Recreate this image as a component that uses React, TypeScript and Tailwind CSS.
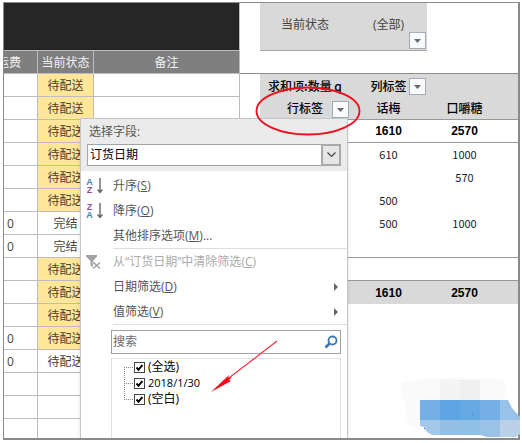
import React, { useState } from 'react';

const orders = [
  { fee: '', status: '待配送', pending: true },
  { fee: '', status: '待配送', pending: true },
  { fee: '', status: '待配送', pending: true },
  { fee: '', status: '待配送', pending: true },
  { fee: '', status: '待配送', pending: true },
  { fee: '', status: '待配送', pending: true },
  { fee: '0', status: '完结', pending: false },
  { fee: '0', status: '完结', pending: false },
  { fee: '', status: '待配送', pending: true },
  { fee: '', status: '待配送', pending: true },
  { fee: '', status: '待配送', pending: true },
  { fee: '0', status: '待配送', pending: true },
  { fee: '0', status: '待配送', pending: false },
  { fee: '', status: '', pending: false },
  { fee: '', status: '', pending: false },
];

const pivotRows = [
  ['610', '1000'],
  ['', '570'],
  ['500', ''],
  ['500', '1000'],
];

const ArrowButton = ({ label, className }: { label: string; className: string }) => (
  <button
    type="button"
    aria-label={label}
    className={'absolute right-px flex h-[17px] w-[17px] items-center justify-center border border-[#a3abb5] bg-[#f9fafc] ' + className}
  >
    <svg width="7" height="4" viewBox="0 0 7 4">
      <path d="M0 0h7L3.5 4z" fill="#6a6a6a" />
    </svg>
  </button>
);

const SortIcon = ({ top, bottom }: { top: string; bottom: string }) => (
  <span className="flex gap-1">
    <span className="flex w-[7px] flex-col text-center font-['Liberation_Sans'] text-[9px] leading-2 font-bold">
      <span className={top === 'A' ? 'text-[#3f7fb8]' : 'text-[#8a4f9e]'}>{top}</span>
      <span className={bottom === 'A' ? 'text-[#3f7fb8]' : 'text-[#8a4f9e]'}>{bottom}</span>
    </span>
    <svg width="6" height="16" viewBox="0 0 6 16">
      <path d="M3 0v15M.5 11.500L3 14.500l2.500-3" fill="none" stroke="#666" strokeWidth="1.400" />
    </svg>
  </span>
);

const ClearFilterIcon = () => (
  <svg width="16" height="16" viewBox="0 0 16 16">
    <path d="M0 1h11v1.5L7 7v6.5L4.5 11V7L0 2.5z" fill="#a3a3a3" />
    <path d="M7 7.5l7.5 7M14 8l-7 6.5" fill="none" stroke="#fff" strokeWidth="3" />
    <path d="M7 8l7 6.500M14 8.500l-7 6" fill="none" stroke="#a3a3a3" strokeWidth="1.600" />
  </svg>
);

const MenuItem = ({ icon, text, hotkey, after = '', disabled = false, submenu = false }: any) => (
  <button
    type="button"
    disabled={disabled}
    className={'flex h-[25px] w-full items-center pr-[9px] text-left ' + (disabled ? 'text-[#ababab]' : 'text-[#555]')}
  >
    <span className="flex w-8 shrink-0 pl-[5px]">{icon}</span>
    <span className="flex-1 whitespace-nowrap">
      {text}(<span className="underline">{hotkey}</span>){after}
    </span>
    {submenu && (
      <svg width="4" height="8" viewBox="0 0 4 8">
        <path d="M0 0l4 4-4 4z" fill="#666" />
      </svg>
    )}
  </button>
);

const FilterMenu = () => {
  const [field, setField] = useState<string>('订货日期')
  const [search, setSearch] = useState<string>('')
  const [checked, setChecked] = useState<string[]>(['(全选)', '2018/1/30', '(空白)'])

  const toggle = (item: string) => {
    setChecked(checked.includes(item) ? checked.filter((i) => i !== item) : [...checked, item])
  }

  return (
    <div className="absolute top-[115px] bottom-0 left-[76px] flex w-[268px] flex-col border border-b-0 border-[#c6c6c6] bg-white shadow-md">
      <div className="bg-[#ebebeb] px-1.5 pb-[5px]">
        <label htmlFor="field" className="block h-[25px] pl-0.5 leading-[25px] text-[#555]">
          选择字段:
        </label>
        <div className="relative">
          <select
            id="field"
            value={field}
            onChange={(e) => setField(e.target.value)}
            className="block h-[22px] w-full appearance-none border border-[#a5a5a5] bg-white pl-0.5 text-black outline-none"
          >
            <option>订货日期</option>
          </select>
          <span className="pointer-events-none absolute inset-y-0 right-0 flex w-5 items-center justify-center border-2 border-[#a9a9a9] bg-[#e6e6e6]">
            <svg width="9" height="6" viewBox="0 0 9 6">
              <path d="M.5.5l4 4 4-4" fill="none" stroke="#444" strokeWidth="1.2" />
            </svg>
          </span>
        </div>
      </div>
      <div className="pt-0.5">
        <MenuItem icon={<SortIcon top="A" bottom="Z" />} text="升序" hotkey="S" />
        <MenuItem icon={<SortIcon top="Z" bottom="A" />} text="降序" hotkey="O" />
        <MenuItem text="其他排序选项" hotkey="M" after="..." />
        <div className="ml-8 h-px bg-[#dedede]" />
        <MenuItem icon={<ClearFilterIcon />} text="从“订货日期”中清除筛选" hotkey="C" disabled />
        <MenuItem text="日期筛选" hotkey="D" submenu />
        <MenuItem text="值筛选" hotkey="V" submenu />
        <div className="ml-8 h-px bg-[#dedede]" />
      </div>
      <div className="flex flex-1 flex-col pt-[5px] pr-1.5 pl-[30px]">
        <div className="flex h-6 items-center border border-[#a0a0a0] pr-0.5">
          <input
            type="text"
            aria-label="搜索"
            placeholder="搜索"
            value={search}
            onChange={(e) => setSearch(e.target.value)}
            className="min-w-0 flex-1 pl-px outline-none placeholder:text-[#6a6a6a]"
          />
          <svg width="14" height="14" viewBox="0 0 14 14" fill="none" stroke="#3f78b5">
            <circle cx="8.500" cy="5.500" r="4" strokeWidth="1.800" />
            <path d="M5.500 8.500L1.500 12.500" strokeWidth="2.600" />
          </svg>
        </div>
        <div className="mt-1 flex-1 border border-b-0 border-[#e1e1e1] pl-3 text-black">
          {['(全选)', '2018/1/30', '(空白)'].map((item, i) => (
            <label key={item} className="flex h-4 items-center">
              <svg width="10" height="16" viewBox="0 0 10 16" stroke="#888" strokeDasharray="1 1">
                <path d={i === 0 ? 'M.5 8v8' : i === 2 ? 'M.5 0v8' : 'M.5 0v16'} />
                <path d="M0 8.500h10" />
              </svg>
              <span className="relative h-[11px] w-[11px]">
                <input
                  type="checkbox"
                  checked={checked.includes(item)}
                  onChange={() => toggle(item)}
                  className="peer block h-[11px] w-[11px] appearance-none border border-[#444] bg-white"
                />
                <svg width="11" height="11" viewBox="0 0 11 11" className="pointer-events-none absolute top-0 left-0 hidden peer-checked:block">
                  <path d="M2.500 5.500l2 2.200 4-4.700" fill="none" stroke="#000" strokeWidth="1.900" />
                </svg>
              </span>
              <span className={'pl-[3px] ' + (i === 1 ? 'text-[11px]' : '')}>{item}</span>
            </label>
          ))}
        </div>
      </div>
    </div>
  );
};

const OrderTable = () => (
  <table className="w-[236px] shrink-0 table-fixed border-separate border-spacing-0 text-center text-[#4a4030]">
    <colgroup>
      <col className="w-[34px]" />
      <col className="w-14" />
      <col />
    </colgroup>
    <thead className="text-[#f2f2f2]">
      <tr>
        <td colSpan={3} className="h-12 border-r border-b border-[#bcbcbc] bg-[#262626]" />
      </tr>
      <tr className="bg-[#7f7f7f]">
        <th className="h-[23px] border-r border-b border-[#bcbcbc] p-0 pt-0.5 font-normal">
          <div className="flex justify-end overflow-hidden pr-4 whitespace-nowrap">运费</div>
        </th>
        <th className="border-r border-b border-[#bcbcbc] p-0 pt-0.5 font-normal">当前状态</th>
        <th className="border-r border-b border-[#bcbcbc] p-0 pt-0.5 font-normal">备注</th>
      </tr>
    </thead>
    <tbody>
      {orders.map((order, i) => (
        <tr key={i}>
          <td className="h-[23px] border-r border-b border-[#bcbcc0] p-0 pt-0.5 pl-[3px] text-left">{order.fee}</td>
          <td className={'border-r border-b border-[#bcbcc0] p-0 pt-0.5 ' + (order.pending ? 'bg-[#ffe699]' : '')}>{order.status}</td>
          <td className="border-r border-b border-[#bcbcc0] p-0" />
        </tr>
      ))}
      <tr>
        <td className="h-[19px] border-r border-[#bcbcc0] p-0" />
        <td className="border-r border-[#bcbcc0] p-0" />
        <td className="border-r border-[#bcbcc0] p-0" />
      </tr>
    </tbody>
  </table>
);

const PivotTable = () => (
  <div className="min-w-0 flex-1">
    <div className="ml-5 flex h-12 w-[167px] border-b border-[#a6a6a6] bg-[#d9d9d9] text-center leading-[44px] text-[#444]">
      <div className="w-[90px]">当前状态</div>
      <div className="relative flex-1">
        (全部)
        <ArrowButton label="筛选当前状态" className="bottom-px" />
      </div>
    </div>
    <table className="mt-[22px] w-full table-fixed border-separate border-spacing-0 border-t border-[#8c8c8c] text-center font-['Noto_Sans_CJK_SC',sans-serif] text-[11px] text-[#222]">
      <colgroup>
        <col className="w-5" />
        <col className="w-[90px]" />
        <col className="w-[77px]" />
        <col className="w-[75px]" />
        <col />
      </colgroup>
      <thead className="text-xs text-black">
        <tr>
          <td className="h-[23px] p-0" />
          <th className="bg-[#d9d9d9] p-0 font-medium whitespace-nowrap">求和项:数量 q</th>
          <th className="relative bg-[#d9d9d9] p-0 font-medium">
            列标签
            <ArrowButton label="筛选列标签" className="top-1" />
          </th>
          <td className="bg-[#d9d9d9] p-0" />
          <td className="bg-[#d9d9d9] p-0" />
        </tr>
        <tr>
          <td className="h-[23px] p-0" />
          <th className="relative border-b border-[#999] bg-[#d9d9d9] p-0 font-medium">
            行标签
            <ArrowButton label="筛选行标签" className="top-1" />
          </th>
          <th className="border-b border-[#999] bg-[#d9d9d9] p-0 font-medium">话梅</th>
          <th className="border-b border-[#999] bg-[#d9d9d9] p-0 font-medium">口嚼糖</th>
          <td className="border-b border-[#999] bg-[#d9d9d9] p-0" />
        </tr>
      </thead>
      <tbody>
        <tr className="font-['Liberation_Sans'] text-xs font-bold text-black">
          <td colSpan={2} className="h-[23px] border-b border-[#999] p-0" />
          <td className="border-b border-[#999] p-0">1610</td>
          <td className="border-b border-[#999] p-0">2570</td>
          <td className="border-b border-[#999] p-0" />
        </tr>
        {pivotRows.map((row, i) => (
          <tr key={i}>
            <td colSpan={2} className="h-[23px] p-0" />
            <td className="p-0 pb-0.5">{row[0]}</td>
            <td className="p-0 pb-0.5">{row[1]}</td>
            <td className="p-0" />
          </tr>
        ))}
        <tr>
          <td colSpan={5} className="h-[23px] border-b border-[#999] p-0" />
        </tr>
        <tr>
          <td colSpan={5} className="h-[23px] border-b border-[#999] p-0" />
        </tr>
        <tr className="bg-[#d9d9d9] font-['Liberation_Sans'] text-xs font-bold text-black">
          <td colSpan={2} className="h-[23px] p-0" />
          <td className="p-0">1610</td>
          <td className="p-0">2570</td>
          <td className="p-0" />
        </tr>
      </tbody>
    </table>
  </div>
);

const App = () => {
  return (
    <div className="bg-white pt-0.5 pr-0.5 pb-[3px] pl-[3px] font-['Open_Sans','Noto_Sans_CJK_SC',sans-serif] text-xs leading-4">
      <div className="relative">
        <div className="relative flex overflow-hidden border border-r-2 border-b-2 border-[#8a8a8a]">
          <OrderTable />
          <PivotTable />
          <FilterMenu />
        </div>

        {/* red marks: circle round the row label and arrow to the date */}
        <svg width="106" height="50" viewBox="0 0 106 50" className="pointer-events-none absolute top-[84px] left-[252px]">
          <ellipse cx="53" cy="25" rx="51.500" ry="23.500" fill="none" stroke="#ee0c1c" strokeWidth="1.800" />
        </svg>
        <svg width="70" height="56" viewBox="0 0 70 56" className="pointer-events-none absolute top-[337px] left-[207px]">
          <path d="M67 2L15 42" stroke="#f0303c" strokeWidth="1.200" />
          <path d="M1 53L19 36l-1 3 4-1-3 3 2 1z" fill="#f00c1c" />
        </svg>

        {/* mosaic patch */}
        <svg width="121" height="62" viewBox="399 376 121 62" className="pointer-events-none absolute right-0 bottom-0.5">
          <path d="M401 383q10-4 30-4l20-1q10-3 20 1l30 0q6 4 5 12l-2 9h-83v28q-12 1-15-8v-18q-7-1-5-19z" fill="#fafafa" />
          <path d="M440 380h20v20h-20z" fill="#f4f4f4" />
          <path d="M460 380h20v20h-20z" fill="#f0f0f0" />
          <path d="M420 400h20v20h-20z" fill="#74b0e6" />
          <path d="M440 400h20v20h-20z" fill="#5ea5e4" />
          <path d="M460 400h20v20h-20z" fill="#65a9e4" />
          <path d="M480 400h20v20h-20z" fill="#74b0e6" />
          <path d="M500 400h8l4 8 8 9v3h-20z" fill="#98c2e8" />
          <path d="M420 420h20v15h-8l-5-3-3-5-4-1z" fill="#a3c8ea" />
          <path d="M440 420h20v15h-20z" fill="#93bfe6" />
          <path d="M460 420h20v15h-20z" fill="#92bfe6" />
          <path d="M480 420h20v17h-13l-7-2z" fill="#9bc2e6" />
          <path d="M500 420h20v14l-4 3h-16z" fill="#bad1e7" />
          <path d="M472 414h1v1h-1zM424 428h1v1h-1z" fill="#2f7fc8" />
        </svg>
      </div>
    </div>
  );
};

export default App;
